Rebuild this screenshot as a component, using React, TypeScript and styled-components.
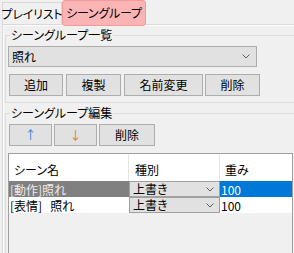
import React from "react";
import styled, { createGlobalStyle } from "styled-components";

const Global = createGlobalStyle`
  html, body {
    margin: 0;
    padding: 0;
    background: #f0f0f0;
  }
  body {
    font-family: "Noto Sans CJK JP", "Noto Sans", sans-serif;
    font-size: 12px;
    font-feature-settings: "palt";
    color: #000;
  }
`;

const Window = styled.div`
  width: 294px;
  height: 253px;
  overflow: hidden;
  background: #f0f0f0;
`;

const TabStrip = styled.div`
  display: flex;
  align-items: flex-end;
  height: 24px;
  padding-left: 2px;
  position: relative;
  z-index: 1;
`;

const Tab = styled.div<{ $active?: boolean; $w: number }>`
  box-sizing: border-box;
  width: ${(p) => p.$w}px;
  height: ${(p) => (p.$active ? 26 : 22)}px;
  margin-bottom: ${(p) => (p.$active ? -2 : 0)}px;
  display: flex;
  align-items: center;
  justify-content: center;
  white-space: nowrap;
  letter-spacing: -0.2px;
  line-height: 16px;
  background: ${(p) => (p.$active ? "#fbb4b4" : "#f0f0f0")};
  border: 1px solid ${(p) => (p.$active ? "#f39a9a" : "#d9d9d9")};
  border-bottom: ${(p) => (p.$active ? "1px solid #f39a9a" : "none")};
  border-radius: ${(p) => (p.$active ? "3px" : "0")};
  padding-bottom: ${(p) => (p.$active ? 1 : 0)}px;
`;

const Page = styled.div`
  width: 320px;
  height: 240px;
  margin-left: 2px;
  padding-left: 2px;
  border-top: 1px solid #d9d9d9;
  border-left: 1px solid #d9d9d9;
  box-shadow: inset 1px 1px 0 #fbfbfb;
  display: flex;
  flex-direction: column;
`;

const Group = styled.fieldset`
  margin: 2px 0 0;
  padding: 3px 0 6px 2px;
  border: 1px solid #dcdcdc;
  min-width: 0;
`;

const Legend = styled.legend`
  padding: 0 1px;
  margin-left: 2px;
  line-height: 16px;
  font-size: 12px;
`;

const Combo = styled.div`
  box-sizing: border-box;
  width: 249px;
  height: 21px;
  border: 1px solid #adadad;
  background: #e1e1e1;
  display: flex;
  align-items: center;
  justify-content: space-between;
  padding: 0 6px 0 3px;
`;

const ButtonRow = styled.div<{ $top?: number }>`
  display: flex;
  gap: 2px;
  padding-left: 1px;
  margin-top: ${(p) => p.$top ?? 0}px;
`;

const Button = styled.button<{ $w: number; $color?: string }>`
  box-sizing: border-box;
  width: ${(p) => p.$w}px;
  height: 22px;
  padding: 0;
  border: 1px solid #adadad;
  background: #e1e1e1;
  font-family: inherit;
  font-size: 12px;
  font-feature-settings: "palt";
  color: ${(p) => p.$color ?? "#000"};
  line-height: 16px;
`;

const Grid = styled.div`
  box-sizing: border-box;
  width: 285px;
  height: 110px;
  margin-top: 7px;
  border: 1px solid #a0a0a0;
  background: #f0f0f0;
`;

const Row = styled.div<{ $h: number; $line?: boolean }>`
  display: grid;
  grid-template-columns: 120px 91px 72px;
  height: ${(p) => p.$h}px;
  box-sizing: border-box;
  border-bottom: ${(p) => (p.$line ? "1px solid #a0a0a0" : "none")};
`;

const HeadCell = styled.div<{ $last?: boolean }>`
  background: #fff;
  display: flex;
  align-items: center;
  padding-left: 5px;
  padding-top: 4px;
  border-right: ${(p) => (p.$last ? "none" : "1px solid #e5e5e5")};
`;

const Cell = styled.div<{ $bg: string; $fg: string }>`
  background: ${(p) => p.$bg};
  color: ${(p) => p.$fg};
  display: flex;
  align-items: center;
  padding-left: 1px;
  line-height: 15px;
  white-space: pre;
  overflow: hidden;
`;

const ComboCell = styled.div`
  box-sizing: border-box;
  border: 1px solid #a0a0a0;
  background: #e1e1e1;
  display: flex;
  align-items: center;
  justify-content: space-between;
  padding: 0 5px 0 3px;
  line-height: 14px;
`;

const Chevron = () => (
  <svg width="8" height="5" viewBox="0 0 8 5">
    <polyline points="0.5,0.5 4,4 7.5,0.5" fill="none" stroke="#606060" strokeWidth="1" />
  </svg>
);

const rows = [
  { name: "[動作]照れ", mode: "上書き", weight: "100", selected: true },
  { name: "[表情]   照れ", mode: "上書き", weight: "100", selected: false },
];

export default function App() {
  return (
    <Window>
      <Global />
      <TabStrip>
        <Tab $w={60}>プレイリスト</Tab>
        <Tab $w={84} $active>
          シーングループ
        </Tab>
      </TabStrip>
      <Page>
        <Group>
          <Legend>シーングループ一覧</Legend>
          <Combo>
            <span>照れ</span>
            <Chevron />
          </Combo>
          <ButtonRow $top={7}>
            <Button $w={54}>追加</Button>
            <Button $w={55} style={{ marginLeft: 1 }}>
              複製
            </Button>
            <Button $w={79} style={{ marginLeft: 1 }}>
              名前変更
            </Button>
            <Button $w={55}>削除</Button>
          </ButtonRow>
        </Group>
        <Group>
          <Legend>シーングループ編集</Legend>
          <ButtonRow>
            <Button $w={43} $color="#2a7fd4">
              ↑
            </Button>
            <Button $w={43} $color="#e07b1a">
              ↓
            </Button>
            <Button $w={56}>削除</Button>
          </ButtonRow>
          <Grid>
            <Row $h={27}>
              <HeadCell>シーン名</HeadCell>
              <HeadCell style={{ paddingLeft: 6 }}>種別</HeadCell>
              <HeadCell $last>重み</HeadCell>
            </Row>
            {rows.map((r, i) => (
              <Row key={i} $h={16} $line={i === rows.length - 1}>
                <Cell $bg={r.selected ? "#808080" : "#fff"} $fg={r.selected ? "#ececec" : "#000"}>
                  {r.name}
                </Cell>
                <ComboCell>
                  <span>{r.mode}</span>
                  <Chevron />
                </ComboCell>
                <Cell $bg={r.selected ? "#0078d7" : "#fff"} $fg={r.selected ? "#fff" : "#000"}>
                  {r.weight}
                </Cell>
              </Row>
            ))}
          </Grid>
        </Group>
      </Page>
    </Window>
  );
}
